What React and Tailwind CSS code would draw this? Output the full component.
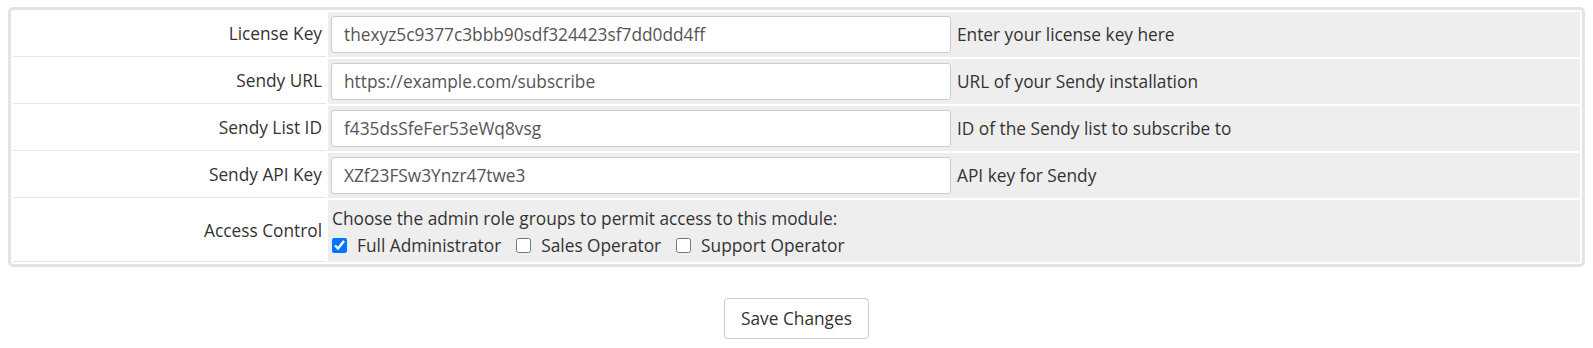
import React, { useState } from 'react';

const fields = [
  { label: 'License Key', value: 'thexyz5c9377c3bbb90sdf324423sf7dd0dd4ff', help: 'Enter your license key here' },
  { label: 'Sendy URL', value: 'https://example.com/subscribe', help: 'URL of your Sendy installation' },
  { label: 'Sendy List ID', value: 'f435dsSfeFer53eWq8vsg', help: 'ID of the Sendy list to subscribe to' },
  { label: 'Sendy API Key', value: 'XZf23FSw3Ynzr47twe3', help: 'API key for Sendy' },
];

const App = () => {
  const [values, setValues] = useState(fields.map((f) => f.value));
  const [roles, setRoles] = useState({ full: true, sales: false, support: false });

  const roleList = [
    { key: 'full', name: 'Full Administrator' },
    { key: 'sales', name: 'Sales Operator' },
    { key: 'support', name: 'Support Operator' },
  ];

  return (
    <div className="px-2 pt-[7px] bg-white text-[#333] text-[17.3px]" style={{ fontFamily: '"Open Sans", "Liberation Sans", sans-serif' }}>
      <div className="border-[3px] border-[#e0e4e7] rounded-[5px]">
        <table className="w-full border-separate border-spacing-[2px]">
          <tbody>
            {fields.map((f, i) => (
              <tr key={f.label}>
                <td className="w-[313px] h-[45px] text-right pr-1 border-b border-[#e6e6e6] align-middle">{f.label}</td>
                <td className="bg-[#eee] h-[45px] px-[3px] align-middle">
                  <div className="flex items-center">
                    <input
                      type="text"
                      value={values[i]}
                      onChange={(e) => {
                        const next = [...values];
                        next[i] = e.target.value;
                        setValues(next);
                      }}
                      className="w-[620px] h-[37px] px-3 bg-white border border-[#ccc] rounded-[3px] text-[#555] outline-none"
                    />
                    <span className="ml-[6px]">{f.help}</span>
                  </div>
                </td>
              </tr>
            ))}
            <tr>
              <td className="w-[313px] h-[62px] text-right pr-1 border-b border-[#e6e6e6] align-middle">Access Control</td>
              <td className="bg-[#eee] h-[62px] px-[4px] pt-[5px] align-top">
                <div className="leading-[27px]">Choose the admin role groups to permit access to this module:</div>
                <div className="flex items-center leading-[27px]">
                  {roleList.map((r) => (
                    <label key={r.key} className="flex items-center mr-[15px]">
                      <input
                        type="checkbox"
                        checked={roles[r.key]}
                        onChange={() => setRoles({ ...roles, [r.key]: !roles[r.key] })}
                        className="w-[15px] h-[15px] accent-[#0075ff] mr-[10px]"
                      />
                      {r.name}
                    </label>
                  ))}
                </div>
              </td>
            </tr>
          </tbody>
        </table>
      </div>
      <div className="flex justify-center mt-[31px]">
        <button className="h-[41px] px-4 bg-white border border-[#ccc] rounded-[4px] text-[#333]">Save Changes</button>
      </div>
    </div>
  );
};

export default App;
